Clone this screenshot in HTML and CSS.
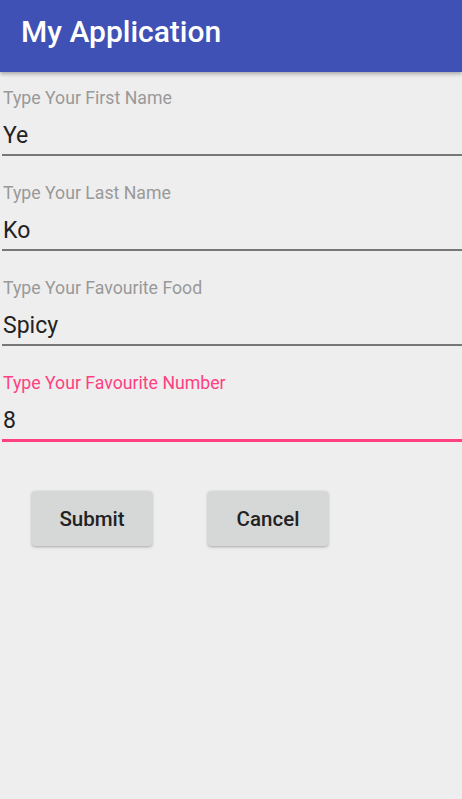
FILE: index.html
```html
<!DOCTYPE html>
<html>
<head>
<meta charset="utf-8">
<link rel="stylesheet" href="styles.css">
</head>
<body>
<header class="appbar"><h1 class="title">My Application</h1></header>
<main class="form">
  <div class="field">
    <label class="label">Type Your First Name</label>
    <div class="value">Ye</div>
  </div>
  <div class="field">
    <label class="label">Type Your Last Name</label>
    <div class="value">Ko</div>
  </div>
  <div class="field">
    <label class="label">Type Your Favourite Food</label>
    <div class="value">Spicy</div>
  </div>
  <div class="field focused">
    <label class="label">Type Your Favourite Number</label>
    <div class="value">8</div>
  </div>
  <div class="buttons">
    <button class="btn">Submit</button>
    <button class="btn">Cancel</button>
  </div>
</main>
</body>
</html>
```

FILE: styles.css
```css
* { box-sizing: border-box; }
html, body { margin: 0; padding: 0; }
body {
  background: #eeeeee;
  font-family: Roboto, "Noto Sans", sans-serif;
  width: 462px;
  height: 799px;
  overflow: hidden;
}
.appbar {
  height: 72px;
  background: #3f51b5;
  display: flex;
  align-items: flex-start;
  padding-left: 21px;
  padding-top: 14px;
  box-shadow: 0 2px 4px rgba(0,0,0,0.3);
  position: relative;
}
.title {
  margin: 0;
  color: #ffffff;
  font-size: 30px;
  line-height: 35px;
  font-weight: 500;
}
.form {
  padding-top: 15px;
}
.field {
  height: 95px;
  padding-left: 2px;
  display: flex;
  flex-direction: column;
}
.label {
  color: #999999;
  font-size: 17.7px;
  padding-left: 1px;
  line-height: 22px;
}
.value {
  color: #222222;
  font-size: 23px;
  line-height: 32px;
  padding-left: 1px;
  margin-top: 11px;
  padding-bottom: 2px;
  border-bottom: 2px solid #777777;
}
.focused .label { color: #ff4081; }
.focused .value { border-bottom: 3px solid #ff4081; }
.buttons {
  display: flex;
  gap: 56px;
  padding-left: 32px;
  margin-top: 24px;
}
.btn {
  width: 120px;
  height: 55px;
  border: none;
  border-radius: 3px;
  background: #d6d7d7;
  color: #222222;
  font-family: Roboto, "Noto Sans", sans-serif;
  font-size: 20.5px;
  font-weight: 500;
  box-shadow: 0 1px 3px rgba(0,0,0,0.3);
}
```
